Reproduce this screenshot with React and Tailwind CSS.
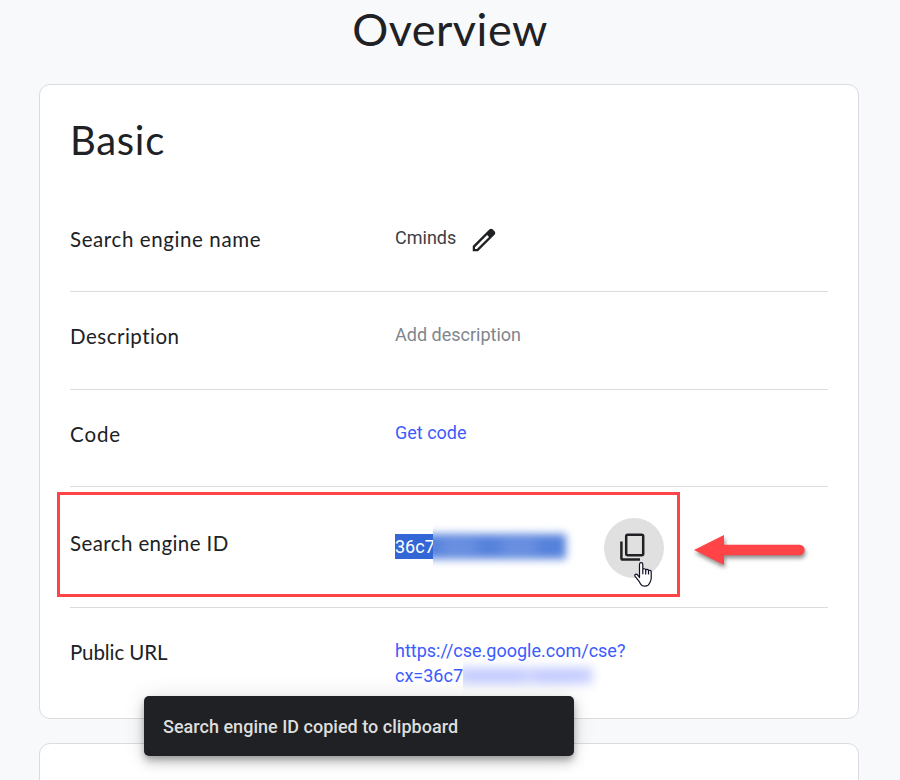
import React from 'react';

const Row = ({ label, className, labelClass, children }) => (
  <div className={`flex items-start border-[#dadce0] ${className}`}>
    <div
      className={`w-[325px] shrink-0 font-['Lato','Inter',sans-serif] text-[20.5px] leading-[26px] text-[#202124] ${labelClass}`}
    >
      <span className="inline-block whitespace-nowrap">{label}</span>
    </div>
    <div className="min-w-0 flex-1 text-[18px] leading-[25px]">{children}</div>
  </div>
);

const PencilIcon = () => (
  <svg viewBox="0 0 24 24" className="h-[30px] w-[30px] fill-[#202124]">
    <path d="M20.41 4.94l-1.35-1.35c-.78-.78-2.05-.78-2.83 0L3 16.82V21h4.18L20.41 7.77c.79-.78.79-2.05 0-2.83zM6.3 19.2H4.8V17.7l9.7-9.7 1.5 1.5-9.7 9.7z" fillRule="evenodd" />
  </svg>
);

const CopyIcon = () => (
  <svg viewBox="0 0 25 29" className="h-[29px] w-[25px] fill-none stroke-[#202124]" strokeWidth="2.5">
    <rect x="6.2" y="1.7" width="17" height="20.6" rx="1.5" />
    <path d="M1.4 8.5v16.4a1.6 1.6 0 0 0 1.6 1.6H20" />
  </svg>
);

const HandCursor = () => (
  <svg viewBox="0 0 18 25" className="h-[25px] w-[18px]" fill="#fff" stroke="#101024" strokeWidth="1.2" strokeLinejoin="round">
    <path d="M5.5 15.5V2.4c0-2.4 3.3-2.4 3.3 0v5c.2-1 2.7-.9 2.9.5.5-.9 2.6-.6 2.8.7.7-.7 2.7-.3 2.7 1.2v6.4c0 3-1.4 4-1.8 5.2-.5 1.6-2.2 2.7-4.4 2.7-2.6 0-4.2-1.4-5-3.2-.8-1.8-3-4-4.9-6.5-1.2-1.8.9-3 2.4-1.6z" />
    <path d="M8.8 7.5v4.8M11.7 8v4.4M14.5 8.8v3.8" fill="none" />
  </svg>
);

const Arrow = () => (
  <svg viewBox="0 0 112 32" className="h-8 w-28 overflow-visible fill-[#ff4346] drop-shadow-[1px_3px_2px_rgba(0,0,0,0.45)]">
    <path d="M0 15 30 0v9.8h75.5a5.2 5.2 0 0 1 0 10.4H30V30z" />
  </svg>
);

export default function App() {
  return (
    <div className="relative h-[780px] w-[900px] overflow-hidden bg-[#f8f9fb] font-['Roboto',sans-serif] text-[#3c4043]">
      <h1 className="h-[57px] pt-[3px] text-center font-['Lato','Inter',sans-serif] text-[45px] leading-[52px] tracking-[0.5px] text-[#202124]">
        Overview
      </h1>

      <div className="mx-auto mt-[27px] mr-[41px] ml-[39px] h-[635px] rounded-[11px] border border-[#dadce0] bg-white px-[30px]">
        <h2 className="pt-[30px] font-['Lato','Inter',sans-serif] text-[40px] leading-[50px] tracking-[0.7px] text-[#202124]">
          Basic
        </h2>

        <Row label="Search engine name" className="mt-[31px] h-[96px] border-b" labelClass="pt-[30px] tracking-[0.6px]">
          <div className="flex">
            <span className="pt-[29px]">Cminds</span>
            <span className="mt-[29px] ml-[13px]">
              <PencilIcon />
            </span>
          </div>
        </Row>
        <Row label="Description" className="h-[98px] border-b" labelClass="pt-[31px] tracking-[0.5px]">
          <div className="pt-[30px] text-[#80868b]">Add description</div>
        </Row>
        <Row label="Code" className="h-[97px] border-b" labelClass="pt-[31px] tracking-[0.9px]">
          <a className="block pt-[30px] text-[#3b5bfd]">Get code</a>
        </Row>

        <Row label="Search engine ID" className="relative h-[121px] border-b" labelClass="pt-[43px] tracking-[0.4px]">
          <div className="flex">
            <div className="mt-[47px] flex h-[25px]">
              <span className="w-[38px] bg-[#3367d6] text-white">36c7</span>
              <div className="-my-[11px] w-[171px] overflow-hidden py-[11px]">
                <div className="-ml-2 h-[25px] w-[141px] bg-[#5682dc] blur-[4px]">
                  <div className="flex h-full items-center gap-6 pl-4">
                    <span className="h-2.5 w-9 bg-[#7699e3] blur-[4px]" />
                    <span className="h-2.5 w-9 bg-[#7699e3] blur-[4px]" />
                  </div>
                </div>
              </div>
            </div>
            <button className="relative mt-[31px] -ml-[0.5px] flex h-[60px] w-[60px] items-center justify-center rounded-full bg-[#e0e0e0] pr-[2px] pb-[2px]">
              <CopyIcon />
              <span className="absolute top-[44px] left-[30px]">
                <HandCursor />
              </span>
            </button>
          </div>
          <div className="absolute top-[5px] -left-[13px] h-[105px] w-[623px] border-[3px] border-[#ff4346]" />
          <div className="absolute top-[48px] left-[624px]">
            <Arrow />
          </div>
        </Row>

        <Row label="Public URL" className="h-[110px]" labelClass="pt-[31px] tracking-[-0.1px]">
          <div className="pt-[30px] text-[#3b5bfd]">
            <div>https://cse.google.com/cse?</div>
            <div className="flex">
              <span className="w-[68px]">cx=36c7</span>
              <div className="-my-2 overflow-hidden py-2 pr-4">
                <div className="-ml-2 pt-[4px]">
                  <div className="flex h-[17px] w-[138px] items-center gap-3 bg-[#d0d6fe] pl-3 blur-[5px]">
                    <span className="h-3 w-14 bg-[#c4ccfe] blur-[2px]" />
                    <span className="h-3 w-12 bg-[#c4ccfe] blur-[2px]" />
                  </div>
                </div>
              </div>
            </div>
          </div>
        </Row>
      </div>

      <div className="mt-6 mr-[41px] ml-[39px] h-[80px] rounded-[11px] border border-[#dadce0] bg-white" />

      <div className="absolute top-[696px] left-[144px] flex h-[60px] w-[430px] items-center rounded-[5px] bg-[#202124] pl-[19px] text-[18px] font-medium tracking-[0.02px] text-[#dedede] shadow-[0_4px_6px_-1px_rgba(0,0,0,0.25),0_7px_12px_rgba(0,0,0,0.16),0_1px_22px_rgba(0,0,0,0.12)]">
        <span className="whitespace-nowrap">Search engine ID copied to clipboard</span>
      </div>
    </div>
  );
}
